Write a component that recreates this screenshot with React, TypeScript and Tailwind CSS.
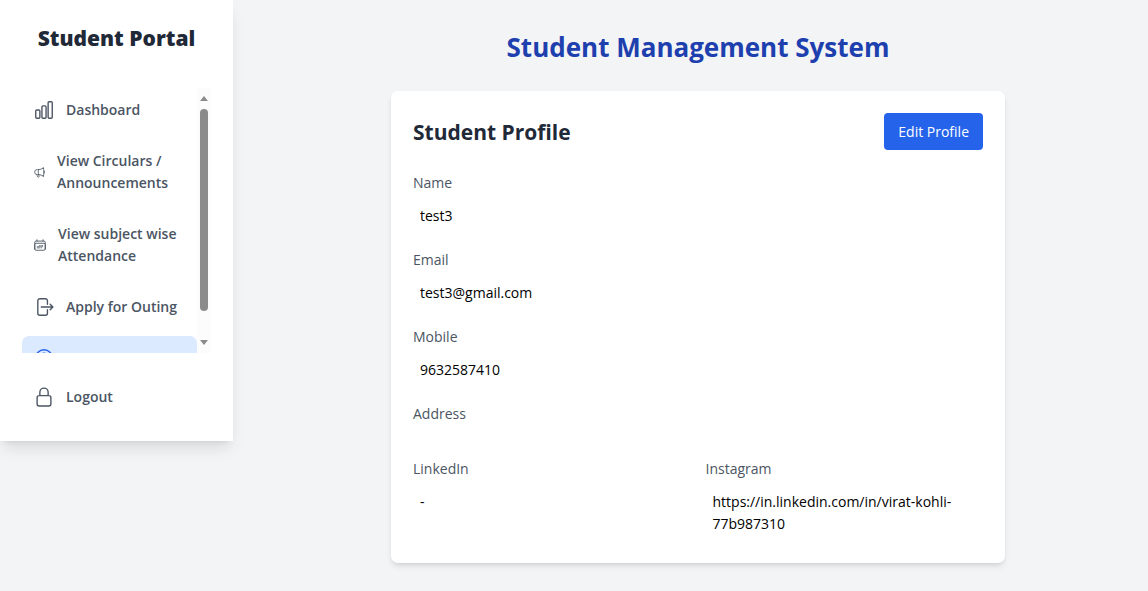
import {
  HiOutlineArrowRightOnRectangle,
  HiOutlineCalendarDays,
  HiOutlineChartBar,
  HiOutlineLockClosed,
  HiOutlineMegaphone,
  HiOutlineUserCircle,
} from "react-icons/hi2";
import type { IconType } from "react-icons";

type NavItem = {
  label: string;
  icon: IconType;
  iconClass: string;
};

const navItems: NavItem[] = [
  { label: "Dashboard", icon: HiOutlineChartBar, iconClass: "size-[22px]" },
  { label: "View Circulars / Announcements", icon: HiOutlineMegaphone, iconClass: "size-[13px]" },
  { label: "View subject wise Attendance", icon: HiOutlineCalendarDays, iconClass: "size-[14px]" },
  { label: "Apply for Outing", icon: HiOutlineArrowRightOnRectangle, iconClass: "size-[22px]" },
];

function NavLink({ label, icon: Icon, iconClass }: NavItem) {
  return (
    <a href="#" className="flex items-center gap-[11px] rounded-[7px] p-[11px] font-semibold text-[#4b5563]">
      <Icon className={`${iconClass} shrink-0`} aria-hidden="true" />
      <span>{label}</span>
    </a>
  );
}

function Scrollbar() {
  return (
    <div aria-hidden="true" className="flex w-[14px] shrink-0 flex-col items-center bg-[#fcfcfc] py-2">
      <svg viewBox="0 0 8 5" className="h-[5px] w-2 fill-[#8b8b8b]">
        <path d="M4 0 8 5H0Z" />
      </svg>
      <div className="mt-2 h-[202px] w-2 rounded-full bg-[#8b8b8b]" />
      <svg viewBox="0 0 8 5" className="mt-auto h-[5px] w-2 fill-[#8b8b8b]">
        <path d="M0 0H8L4 5Z" />
      </svg>
    </div>
  );
}

function Sidebar() {
  return (
    <aside className="w-[233px] shrink-0 bg-white p-[22px] shadow-lg">
      <h2 className="mb-[34px] text-center text-[21px] leading-8 font-extrabold text-[#1f2937]">Student Portal</h2>
      <div className="flex h-[265px]">
        <nav aria-label="Main" className="flex-1 space-y-[7px] overflow-y-auto [scrollbar-width:none]">
          {navItems.map((item) => (
            <NavLink key={item.label} {...item} />
          ))}
          <a
            href="#"
            aria-current="page"
            aria-label="Profile"
            className="flex items-center rounded-[7px] bg-[#dbeafe] p-[11px] text-[#2563eb]"
          >
            <HiOutlineUserCircle className="size-[22px]" aria-hidden="true" />
          </a>
        </nav>
        <Scrollbar />
      </div>
      <button type="button" className="mt-[22px] flex w-full items-center gap-[11px] p-[11px] font-semibold text-[#4b5563]">
        <HiOutlineLockClosed className="size-[22px]" aria-hidden="true" />
        Logout
      </button>
    </aside>
  );
}

function Field({ label, value }: { label: string; value: string }) {
  return (
    <div>
      <dt className="mb-1 text-[#4b5563]">{label}</dt>
      <dd className="p-[7px] break-words text-black">{value}</dd>
    </div>
  );
}

export default function App() {
  return (
    <div className="flex min-h-screen items-start gap-[15px] bg-[#f3f4f6] font-['Open_Sans','Noto_Sans',sans-serif] text-[14px] leading-[22px]">
      <Sidebar />
      <main className="min-w-0 flex-1 px-[22px] py-[29px]">
        <h1 className="mb-[26px] text-center text-[26px] leading-9 font-bold text-[#1e40af]">Student Management System</h1>
        <section className="mx-auto max-w-[614px] rounded-[7px] bg-white px-[22px] pt-[22px] pb-[21px] shadow-md">
          <div className="mb-[22px] flex items-center justify-between">
            <h2 className="text-[21px] leading-[30px] font-bold text-[#1f2937]">Student Profile</h2>
            <button type="button" className="rounded-[4px] bg-[#2563eb] px-[14px] py-[7px] leading-[23px] text-white">
              Edit Profile
            </button>
          </div>
          <dl className="space-y-[15px]">
            <Field label="Name" value="test3" />
            <Field label="Email" value="test3@gmail.com" />
            <Field label="Mobile" value="9632587410" />
            <Field label="Address" value="" />
            <div className="grid grid-cols-2 gap-[15px]">
              <Field label="LinkedIn" value="-" />
              <Field label="Instagram" value="https://in.linkedin.com/in/virat-kohli-77b987310" />
            </div>
          </dl>
        </section>
      </main>
    </div>
  );
}
